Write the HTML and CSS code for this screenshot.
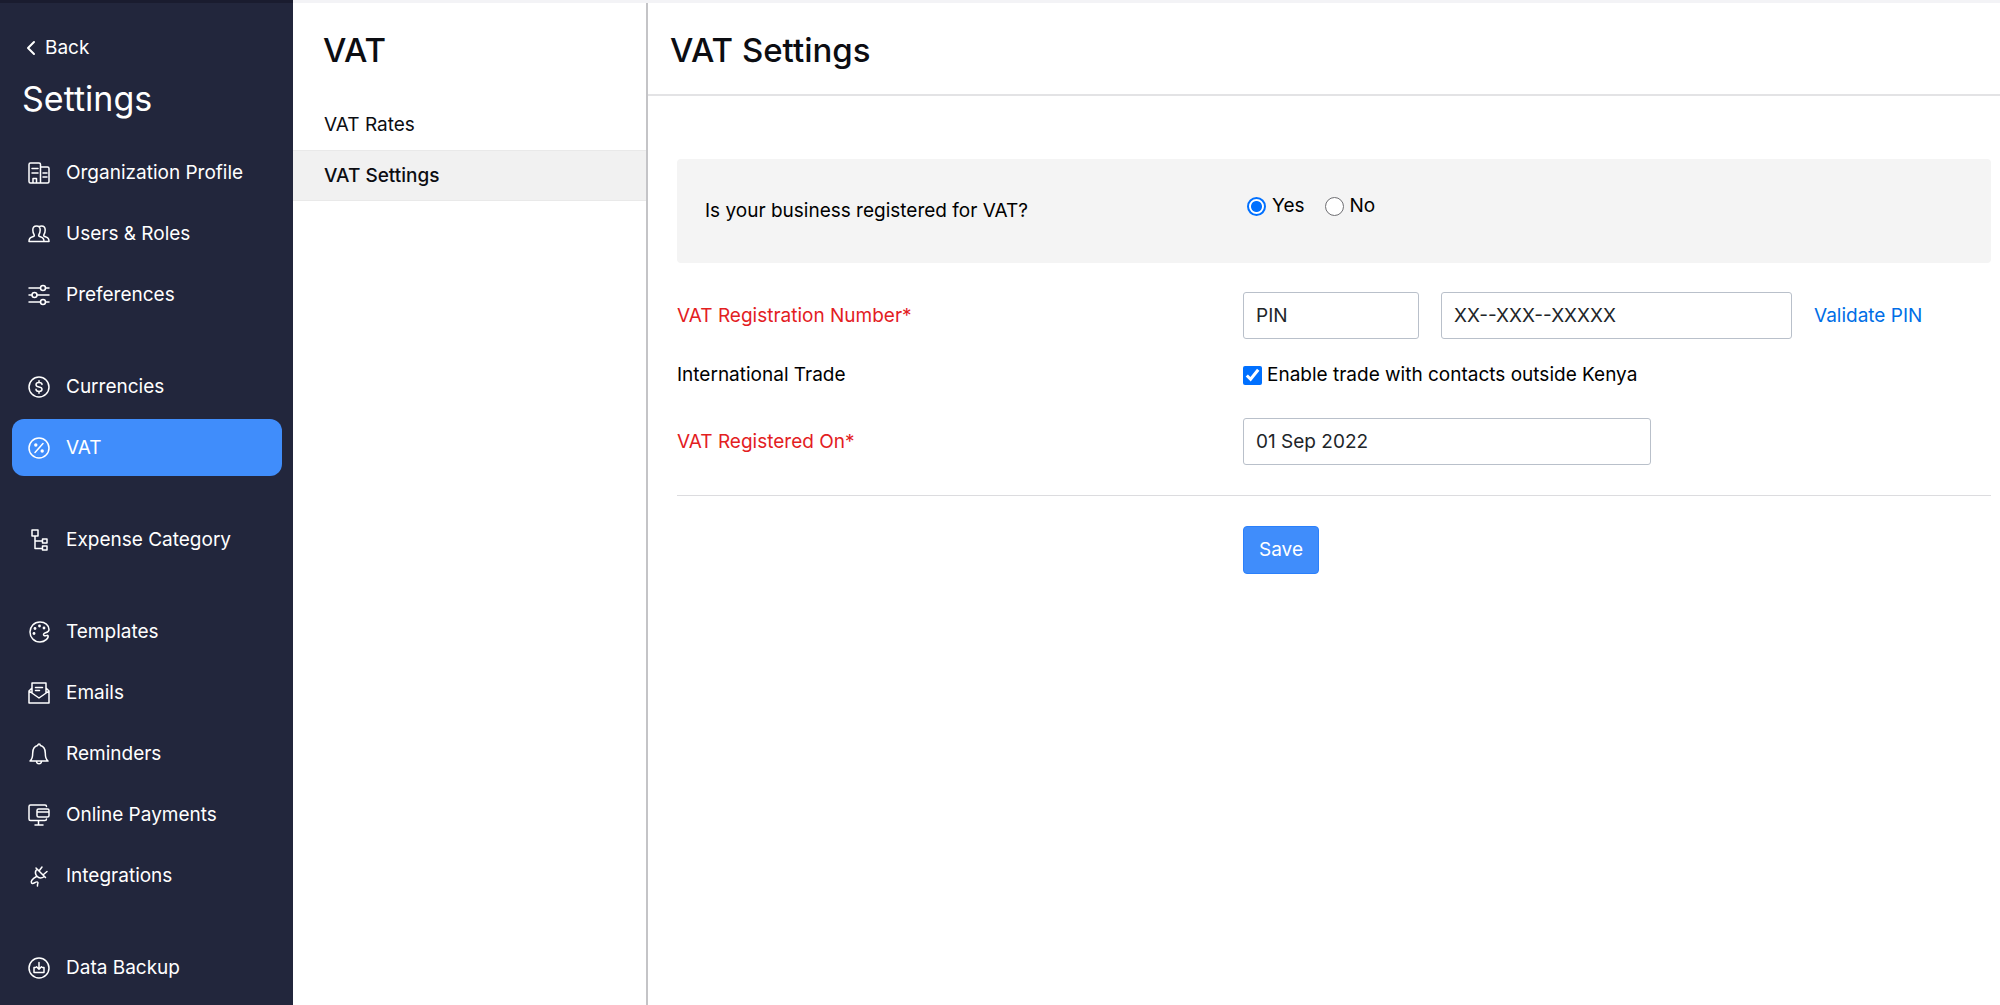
FILE: index.html
```html
<!DOCTYPE html>
<html lang="en">
<head>
<meta charset="utf-8">
<meta name="viewport" content="width=device-width, initial-scale=1">
<title>VAT Settings</title>
<link rel="stylesheet" href="styles.css">
</head>
<body>
<div class="app">
  <aside class="sidebar">
    <a class="back" href="#"><svg class="back-icon" viewBox="0 0 10 16"><path d="M8 2 2 8l6 6"/></svg>Back</a>
    <h2 class="sidebar-title">Settings</h2>
    <nav class="menu" aria-label="Settings">
      <div class="menu-group">
        <a class="menu-item" href="#"><svg class="icon" viewBox="0 0 22 22"><path d="M1 19.500V2.500Q1 1 2.500 1H11q1.500 0 1.500 1.500V21H2.500Q1 21 1 19.500zM12.500 5H19.500Q21 5 21 6.500V19.500Q21 21 19.500 21H12.500M4 6.500h6M4 11h6M15 11h4M15 15h4M5 21v-4.500h3.500V21"/></svg>Organization Profile</a>
        <a class="menu-item" href="#"><svg class="icon" viewBox="0 0 22 22"><path d="M1 18.500C1 15.500 2 14.500 4 14c2-.5 2.700-1 2.200-2.200C5 10 4.800 8.500 4.800 7c0-2.500 1.500-4 3.700-4s3.700 1.500 3.700 4c0 1.500-.2 3-1.400 4.800-.5 1.200.2 1.700 2.200 2.200s3 1.500 3 4.500zM11 3.700c1-.6 1.600-.7 2.500-.7 2.200 0 3.700 1.500 3.700 4 0 1.500-.2 3-1.400 4.800-.5 1.200.2 1.700 2.200 2.200s3 1.500 3 4.500h-4"/></svg>Users &amp; Roles</a>
        <a class="menu-item" href="#"><svg class="icon" viewBox="0 0 22 22"><path d="M1 4h11.500M17.500 4H21M1 11h3M9 11h12M1 18h11.500M17.500 18H21"/><circle cx="15" cy="4" r="2.500"/><circle cx="6.500" cy="11" r="2.500"/><circle cx="15" cy="18" r="2.500"/></svg>Preferences</a>
      </div>
      <div class="menu-group">
        <a class="menu-item" href="#"><svg class="icon" viewBox="0 0 22 22"><circle cx="11" cy="11" r="10"/><path d="M14 8.500C14 7 12.800 6.500 11 6.500S8 7.200 8 8.700 9.200 10.700 11 11s3 .8 3 2.300-1.200 2.200-3 2.200-3-.7-3-2.200M11 4.800v1.700M11 15.500v1.700"/></svg>Currencies</a>
        <a class="menu-item menu-item-active" href="#" aria-current="page"><svg class="icon" viewBox="0 0 22 22"><circle cx="11" cy="11" r="10"/><path d="m7 15.500 8-9"/><circle class="solid" cx="7.800" cy="8" r="1.700"/><circle class="solid" cx="14.200" cy="14" r="1.700"/></svg>VAT</a>
      </div>
      <div class="menu-group">
        <a class="menu-item" href="#"><svg class="icon" viewBox="0 0 22 22"><path d="M4 1h6v6H4zM7 7v12.500h7.500M7 12h7.500M14.500 10H19v4h-4.500zM14.500 17H19v4h-4.500z"/></svg>Expense Category</a>
      </div>
      <div class="menu-group">
        <a class="menu-item" href="#"><svg class="icon" viewBox="0 0 22 22"><path d="M20 14.500C21 17 17 21 12 21 6 21 2 16.500 2 11S6 1 12 1c5 0 9 3 9 7.500 0 2-1.500 2.800-3.500 3.300-2 .6-2.500 1.700-1.500 2.700 1.200 1.200 3-.7 4 0z"/><circle class="solid" cx="6" cy="12.500" r="1.400"/><circle class="solid" cx="7" cy="7.500" r="1.400"/><circle class="solid" cx="11.500" cy="5" r="1.400"/><circle class="solid" cx="16" cy="7" r="1.400"/></svg>Templates</a>
        <a class="menu-item" href="#"><svg class="icon" viewBox="0 0 22 22"><path d="M4 11V1h14v10M4 6 1 9v12h20V9l-3-3M1 9l10 7L21 9M7.500 5.500h7M7.500 8.500h4"/></svg>Emails</a>
        <a class="menu-item" href="#"><svg class="icon" viewBox="0 0 22 22"><path d="M2 18c2-1.500 2.700-3 2.700-8 0-4.500 2.300-7 5-7.600a1.300 1.300 0 0 1 2.600 0c2.700.6 5 3.100 5 7.600 0 5 .7 6.500 2.700 8zM8.500 18.500c.4 3 4.600 3 5 0"/></svg>Reminders</a>
        <a class="menu-item" href="#"><svg class="icon" viewBox="0 0 22 22"><path d="M18.500 2.500Q18.500 1 17 1H2.500Q1 1 1 2.500V15q0 1.500 1.500 1.500H17q1.500 0 1.500-1.500M10.500 16.500v4M7 21h8M9 6.500Q9 5 10.500 5h9Q21 5 21 6.500v5q0 1.500-1.500 1.500h-9Q9 13 9 11.500zM9 8h12"/></svg>Online Payments</a>
        <a class="menu-item" href="#"><svg class="icon" viewBox="0 0 22 22"><path d="m8 3 9.500 9.500M9 4c-2.500 3-2 5 0 7.300s4.500 2.200 7.500.2M11 6l3-4M15.500 9.500 19 6.500M8.500 11.500C5 13.500 2.500 16 3.500 18s4.500-2 6-1-.5 1.500 0 4"/></svg>Integrations</a>
      </div>
      <div class="menu-group">
        <a class="menu-item" href="#"><svg class="icon" viewBox="0 0 22 22"><circle cx="11" cy="11" r="10"/><path d="M11 5.500v6.500M8.500 9.800 11 12.300l2.500-2.500M7.500 10.500H6v5h10v-5h-1.500"/></svg>Data Backup</a>
      </div>
    </nav>
  </aside>
  <section class="subnav">
    <h2 class="title subnav-title">VAT</h2>
    <nav aria-label="VAT">
      <a class="subnav-item" href="#">VAT Rates</a>
      <a class="subnav-item subnav-item-active" href="#" aria-current="page">VAT Settings</a>
    </nav>
  </section>
  <main class="main">
    <header class="main-header"><h1 class="title">VAT Settings</h1></header>
    <form class="form">
      <div class="row question" role="radiogroup" aria-labelledby="registered">
        <span class="question-text" id="registered">Is your business registered for VAT?</span>
        <div class="radios">
          <label class="choice"><input class="tick radio" type="radio" name="registered" checked>Yes</label>
          <label class="choice"><input class="tick radio" type="radio" name="registered">No</label>
        </div>
      </div>
      <div class="row">
        <label class="required" for="vat-number">VAT Registration Number*</label>
        <div class="fields">
          <input class="field field-type" type="text" value="PIN" aria-label="Number type">
          <input class="field field-number" id="vat-number" type="text" value="XX--XXX--XXXXX">
          <a class="validate" href="#">Validate PIN</a>
        </div>
      </div>
      <div class="row row-trade">
        <span>International Trade</span>
        <label class="trade"><input class="tick" type="checkbox" checked>Enable trade with contacts outside Kenya</label>
      </div>
      <div class="row">
        <label class="required" for="vat-date">VAT Registered On*</label>
        <div class="fields"><input class="field field-date" id="vat-date" type="text" value="01 Sep 2022"></div>
      </div>
      <div class="row actions"><button class="save" type="button">Save</button></div>
    </form>
  </main>
</div>
</body>
</html>
```
FILE: styles.css
```css
* {
  box-sizing: border-box;
}

body {
  margin: 0;
  background: #fff;
  color: #0c0d12;
  font: 400 19px/24px Inter, "Liberation Sans", sans-serif;
}

a {
  color: inherit;
  text-decoration: none;
}

h1,
h2 {
  margin: 0;
}

.app {
  display: flex;
  min-height: 100vh;
  border-top: 3px solid #f3f3f6;
}

/* Dark settings sidebar */
.sidebar {
  flex: 0 0 293px;
  margin-top: -3px;
  padding: 0 11px 8px 12px;
  border-top: 3px solid #1a1c2f;
  background: #22263c;
  color: #fff;
}

.back {
  display: flex;
  align-items: center;
  gap: 9px;
  margin: 33px 0 0 14px;
}

.back-icon {
  width: 10px;
  height: 16px;
}

.back-icon,
.icon {
  fill: none;
  stroke: currentColor;
  stroke-width: 1.5;
  stroke-linecap: round;
  stroke-linejoin: round;
}

.back-icon {
  stroke-width: 2;
}

.icon {
  flex: none;
  width: 22px;
  height: 22px;
}

.solid {
  fill: currentColor;
  stroke: none;
}

.sidebar-title {
  margin: 19px 0 25px 10px;
  font-size: 34px;
  font-weight: 400;
  line-height: 40px;
}

.menu {
  display: flex;
  flex-direction: column;
  gap: 35px;
}

.menu-group {
  display: flex;
  flex-direction: column;
  gap: 4px;
}

.menu-item {
  display: flex;
  align-items: center;
  gap: 16px;
  height: 57px;
  padding: 0 16px;
  border-radius: 12px;
}

.menu-item-active {
  background: #408dfb;
}

/* Second-level navigation */
.subnav {
  flex: 0 0 355px;
  border-right: 2px solid #c4c4c7;
}

.title {
  font-size: 33px;
  font-weight: 500;
  line-height: 40px;
}

.subnav-title {
  padding: 27px 30px 29px;
}

.subnav-item {
  display: flex;
  align-items: center;
  height: 51px;
  padding: 0 31px;
}

.subnav-item-active {
  border: solid #e9e9e9;
  border-width: 1px 0;
  background: #f1f1f1;
  font-weight: 500;
}

/* Main form */
.main {
  flex: 1;
  min-width: 0;
}

.main-header {
  padding: 27px 22px 24px;
  border-bottom: 2px solid #e3e3e5;
}

.form {
  padding: 63px 9px 0 29px;
  color: #000;
}

.row {
  display: grid;
  grid-template-columns: 283fr 374fr;
  align-items: center;
}

.question {
  height: 104px;
  margin-bottom: 29px;
  border-radius: 4px;
  background: #f4f4f4;
}

.question-text {
  padding-left: 28px;
}

.radios {
  display: flex;
  gap: 20px;
  padding: 0 0 10px 4px;
}

.choice,
.trade {
  display: flex;
  align-items: center;
}

.choice {
  gap: 6px;
}

.trade {
  gap: 5px;
}

.tick {
  width: 19px;
  height: 19px;
  margin: 0;
  accent-color: #0070ff;
}

.radio {
  appearance: none;
  border: 1px solid #6f6f73;
  border-radius: 50%;
  background: #fff;
}

.radio:checked {
  border: 2px solid #0070ff;
  background: radial-gradient(circle, #0070ff 5px, #fff 6px);
}

.required {
  color: #e3201f;
}

.fields {
  display: flex;
  align-items: center;
  gap: 22px;
}

.field {
  height: 47px;
  padding: 0 12px;
  border: 1px solid #b9c0ca;
  border-radius: 3px;
  background: #fff;
  color: #212529;
  font: inherit;
}

.field-type {
  width: 176px;
}

.field-number {
  width: 351px;
}

.field-date {
  width: 408px;
}

.validate {
  color: #006ee6;
}

.row-trade {
  padding: 24px 0 31px;
}

.actions {
  margin-top: 30px;
  padding-top: 30px;
  border-top: 1px solid #dcdcdf;
}

.save {
  grid-column: 2;
  justify-self: start;
  height: 48px;
  padding: 0 15px;
  border: 1px solid #2b80fb;
  border-radius: 4px;
  background: #408dfb;
  color: #fff;
  font: inherit;
}
```
